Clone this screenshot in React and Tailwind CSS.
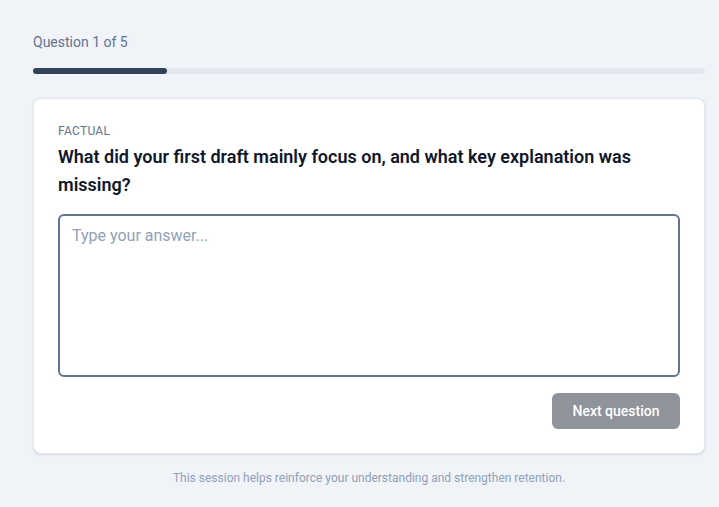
export default function App() {
  return (
    <div className="min-h-[507px] w-full bg-[#f0f3f8] font-['Roboto',sans-serif]">
      <div className="w-[672px] ml-[33px] pt-[32px] pb-6">
        <div className="text-sm leading-5 text-slate-500">Question 1 of 5</div>
        <div className="mt-4 h-1.5 w-full rounded-full bg-slate-200">
          <div className="h-1.5 w-1/5 rounded-full bg-slate-700" />
        </div>
        <div className="mt-6 rounded-lg border border-slate-200 bg-white p-6 shadow-sm">
          <div className="text-xs leading-4 uppercase tracking-wide text-slate-500">Factual</div>
          <div className="mt-1 text-lg leading-7 font-semibold text-slate-900">
            What did your first draft mainly focus on, and what key explanation was missing?
          </div>
          <textarea
            className="mt-[15px] block h-[163px] w-full resize-none rounded-md border-2 border-slate-500 px-3 py-2 text-base text-slate-900 placeholder:text-slate-400 outline-none"
            placeholder="Type your answer..."
          />
          <div className="mt-4 flex justify-end">
            <button className="h-9 w-32 rounded-md bg-[#8f939b] text-sm font-medium text-white">
              Next question
            </button>
          </div>
        </div>
        <div className="mt-4 text-center text-xs leading-4 text-slate-400">
          This session helps reinforce your understanding and strengthen retention.
        </div>
      </div>
    </div>
  );
}
